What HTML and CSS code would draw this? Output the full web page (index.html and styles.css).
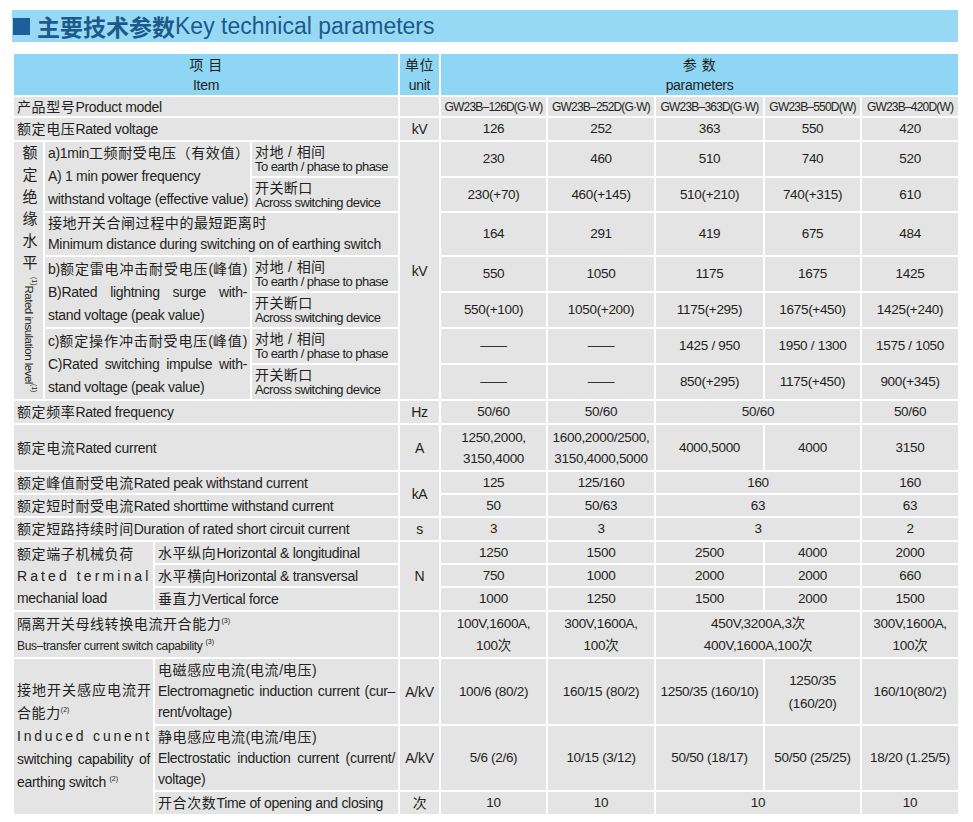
FILE: index.html
```html
<!DOCTYPE html>
<html lang="zh-CN">
<head>
<meta charset="utf-8">
<title>主要技术参数</title>
<link rel="stylesheet" href="styles.css">
</head>
<body>
<div class="page">
  <div class="title-bar">
    <span class="title-mark"></span>
    <span class="title-cn">主要技术参数</span><span class="title-en">Key technical parameters</span>
  </div>
  <table class="spec">
    <colgroup>
      <col class="c-a"><col class="c-b"><col class="c-c"><col class="c-d"><col class="c-unit">
      <col class="c-p1"><col class="c-p2"><col class="c-p3"><col class="c-p4"><col class="c-p5">
    </colgroup>
    <thead>
      <tr class="h43">
        <th colspan="4"><div class="zh hd-gap">项 目</div><div>Item</div></th>
        <th><div class="zh">单位</div><div>unit</div></th>
        <th colspan="5"><div class="zh hd-gap">参 数</div><div>parameters</div></th>
      </tr>
    </thead>
    <tbody>
      <tr class="h21">
        <td colspan="4" class="item"><span class="zh">产品型号</span>Product model</td>
        <td class="unit"></td>
        <td class="val model">GW23B–126D(G·W)</td>
        <td class="val model">GW23B–252D(G·W)</td>
        <td class="val model">GW23B–363D(G·W)</td>
        <td class="val model">GW23B–550D(W)</td>
        <td class="val model">GW23B–420D(W)</td>
      </tr>
      <tr class="h24">
        <td colspan="4" class="item"><span class="zh">额定电压</span>Rated voltage</td>
        <td class="unit">kV</td>
        <td class="val">126</td><td class="val">252</td><td class="val">363</td><td class="val">550</td><td class="val">420</td>
      </tr>
      <tr class="h36">
        <td rowspan="7" class="vcell"><span class="vlabel"><span class="vzh">额定绝缘水平</span><span class="fn">(1)</span><span class="ven">Rated insulation level</span><span class="fn">(1)</span></span></td>
        <td colspan="2" rowspan="2" class="grp lh23">
          <div>a)1min<span class="zh">工频耐受电压（有效值）</span></div>
          <div>A) 1 min power frequency</div>
          <div>withstand voltage (effective value)</div>
        </td>
        <td class="sub"><div class="sub-zh">对地 / 相间</div><div class="sub-en">To earth / phase to phase</div></td>
        <td rowspan="7" class="unit">kV</td>
        <td class="val">230</td><td class="val">460</td><td class="val">510</td><td class="val">740</td><td class="val">520</td>
      </tr>
      <tr class="h35">
        <td class="sub"><div class="sub-zh">开关断口</div><div class="sub-en">Across switching device</div></td>
        <td class="val">230(+70)</td><td class="val">460(+145)</td><td class="val">510(+210)</td><td class="val">740(+315)</td><td class="val">610</td>
      </tr>
      <tr class="h44">
        <td colspan="3" class="grp lh21">
          <div><span class="zh">接地开关合闸过程中的最短距离时</span></div>
          <div>Minimum distance during switching on of earthing switch</div>
        </td>
        <td class="val">164</td><td class="val">291</td><td class="val">419</td><td class="val">675</td><td class="val">484</td>
      </tr>
      <tr class="h36">
        <td colspan="2" rowspan="2" class="grp lh23">
          <div class="jl">b)<span class="zh">额定雷电冲击耐受电压</span>(<span class="zh">峰值</span>)</div>
          <div class="jl">B)Rated lightning surge with-</div>
          <div>stand voltage (peak value)</div>
        </td>
        <td class="sub"><div class="sub-zh">对地 / 相间</div><div class="sub-en">To earth / phase to phase</div></td>
        <td class="val">550</td><td class="val">1050</td><td class="val">1175</td><td class="val">1675</td><td class="val">1425</td>
      </tr>
      <tr class="h36">
        <td class="sub"><div class="sub-zh">开关断口</div><div class="sub-en">Across switching device</div></td>
        <td class="val">550(+100)</td><td class="val">1050(+200)</td><td class="val">1175(+295)</td><td class="val">1675(+450)</td><td class="val">1425(+240)</td>
      </tr>
      <tr class="h36">
        <td colspan="2" rowspan="2" class="grp lh23">
          <div class="jl">c)<span class="zh">额定操作冲击耐受电压</span>(<span class="zh">峰值</span>)</div>
          <div class="jl">C)Rated switching impulse with-</div>
          <div>stand voltage (peak value)</div>
        </td>
        <td class="sub"><div class="sub-zh">对地 / 相间</div><div class="sub-en">To earth / phase to phase</div></td>
        <td class="val dash">——</td><td class="val dash">——</td><td class="val">1425 / 950</td><td class="val">1950 / 1300</td><td class="val">1575 / 1050</td>
      </tr>
      <tr class="h36">
        <td class="sub"><div class="sub-zh">开关断口</div><div class="sub-en">Across switching device</div></td>
        <td class="val dash">——</td><td class="val dash">——</td><td class="val">850(+295)</td><td class="val">1175(+450)</td><td class="val">900(+345)</td>
      </tr>
      <tr class="h24">
        <td colspan="4" class="item"><span class="zh">额定频率</span>Rated frequency</td>
        <td class="unit">Hz</td>
        <td class="val">50/60</td><td class="val">50/60</td><td colspan="2" class="val">50/60</td><td class="val">50/60</td>
      </tr>
      <tr class="h47">
        <td colspan="4" class="item"><span class="zh">额定电流</span>Rated current</td>
        <td class="unit">A</td>
        <td class="val lh21"><div>1250,2000,</div><div>3150,4000</div></td>
        <td class="val lh21"><div>1600,2000/2500,</div><div>3150,4000,5000</div></td>
        <td class="val">4000,5000</td>
        <td class="val">4000</td>
        <td class="val">3150</td>
      </tr>
      <tr class="h23">
        <td colspan="4" class="item"><span class="zh">额定峰值耐受电流</span>Rated peak withstand current</td>
        <td rowspan="2" class="unit">kA</td>
        <td class="val">125</td><td class="val">125/160</td><td colspan="2" class="val">160</td><td class="val">160</td>
      </tr>
      <tr class="h23">
        <td colspan="4" class="item"><span class="zh">额定短时耐受电流</span>Rated shorttime withstand current</td>
        <td class="val">50</td><td class="val">50/63</td><td colspan="2" class="val">63</td><td class="val">63</td>
      </tr>
      <tr class="h24">
        <td colspan="4" class="item"><span class="zh">额定短路持续时间</span>Duration of rated short circuit current</td>
        <td class="unit">s</td>
        <td class="val">3</td><td class="val">3</td><td colspan="2" class="val">3</td><td class="val">2</td>
      </tr>
      <tr class="h23">
        <td colspan="2" rowspan="3" class="item lh22">
          <div><span class="zh">额定端子机械负荷</span></div>
          <div class="spread-rt">Rated terminal</div>
          <div>mechanial load</div>
        </td>
        <td colspan="2" class="item"><span class="zh">水平纵向</span>Horizontal &amp; longitudinal</td>
        <td rowspan="3" class="unit">N</td>
        <td class="val">1250</td><td class="val">1500</td><td class="val">2500</td><td class="val">4000</td><td class="val">2000</td>
      </tr>
      <tr class="h23">
        <td colspan="2" class="item"><span class="zh">水平横向</span>Horizontal &amp; transversal</td>
        <td class="val">750</td><td class="val">1000</td><td class="val">2000</td><td class="val">2000</td><td class="val">660</td>
      </tr>
      <tr class="h24">
        <td colspan="2" class="item"><span class="zh">垂直力</span>Vertical force</td>
        <td class="val">1000</td><td class="val">1250</td><td class="val">1500</td><td class="val">2000</td><td class="val">1500</td>
      </tr>
      <tr class="h47">
        <td colspan="4" class="item lh22">
          <div><span class="zh">隔离开关母线转换电流开合能力</span><span class="fn">(3)</span></div>
          <div class="small-en">Bus–transfer current switch capability <span class="fn">(3)</span></div>
        </td>
        <td class="unit"></td>
        <td class="val lh22"><div>100V,1600A,</div><div>100次</div></td>
        <td class="val lh22"><div>300V,1600A,</div><div>100次</div></td>
        <td colspan="2" class="val lh22"><div>450V,3200A,3次</div><div>400V,1600A,100次</div></td>
        <td class="val lh22"><div>300V,1600A,</div><div>100次</div></td>
      </tr>
      <tr class="h67">
        <td colspan="2" rowspan="3" class="item lh23">
          <div class="spread-zh">接地开关感应电流开</div>
          <div><span class="zh">合能力</span><span class="fn">(2)</span></div>
          <div class="spread-ic">Induced cunent</div>
          <div class="jl">switching capability of</div>
          <div>earthing switch <span class="fn">(2)</span></div>
        </td>
        <td colspan="2" class="item lh21">
          <div><span class="zh">电磁感应电流</span>(<span class="zh">电流</span>/<span class="zh">电压</span>)</div>
          <div class="jl">Electromagnetic induction current (cur–</div>
          <div>rent/voltage)</div>
        </td>
        <td class="unit">A/kV</td>
        <td class="val">100/6 (80/2)</td>
        <td class="val">160/15 (80/2)</td>
        <td class="val">1250/35 (160/10)</td>
        <td class="val lh23"><div>1250/35</div><div>(160/20)</div></td>
        <td class="val">160/10(80/2)</td>
      </tr>
      <tr class="h66">
        <td colspan="2" class="item lh21">
          <div><span class="zh">静电感应电流</span>(<span class="zh">电流</span>/<span class="zh">电压</span>)</div>
          <div class="jl">Electrostatic induction current (current/</div>
          <div>voltage)</div>
        </td>
        <td class="unit">A/kV</td>
        <td class="val">5/6 (2/6)</td>
        <td class="val">10/15 (3/12)</td>
        <td class="val">50/50 (18/17)</td>
        <td class="val">50/50 (25/25)</td>
        <td class="val">18/20 (1.25/5)</td>
      </tr>
      <tr class="h24">
        <td colspan="2" class="item"><span class="zh">开合次数</span>Time of opening and closing</td>
        <td class="unit zh">次</td>
        <td class="val">10</td><td class="val">10</td><td colspan="2" class="val">10</td><td class="val">10</td>
      </tr>
    </tbody>
  </table>
</div>
</body>
</html>
```

FILE: styles.css
```css
body {
  margin: 0;
  background: #ffffff;
  font-family: "Liberation Sans", "Noto Sans CJK SC", sans-serif;
  color: #231f20;
}

.page {
  padding: 10px 0 8px 12px;
  width: 946px;
}

.title-bar {
  height: 32px;
  background: #97d9f5;
  display: flex;
  align-items: center;
}

.title-mark {
  width: 17px;
  height: 17px;
  background: #1f5f99;
  margin: 0 7px 0 1px;
}

.title-cn {
  font-family: "Noto Sans CJK SC", sans-serif;
  font-weight: 700;
  font-size: 23px;
  line-height: 32px;
  color: #1c5a8a;
}

.title-en {
  font-family: "Liberation Sans", sans-serif;
  font-size: 23px;
  line-height: 32px;
  color: #1c5a8a;
}

.spec {
  margin-top: 10px;
  width: 946px;
  border-collapse: collapse;
  table-layout: fixed;
  font-size: 14px;
}

.c-a { width: 31px; }
.c-b { width: 110px; }
.c-c { width: 97px; }
.c-d { width: 148px; }
.c-unit { width: 41px; }
.c-p1 { width: 107px; }
.c-p2 { width: 108px; }
.c-p3 { width: 109px; }
.c-p4 { width: 97px; }
.c-p5 { width: 98px; }

.spec th,
.spec td {
  border: 2px solid #ffffff;
  background: #e4e4e4;
  padding: 0 3px;
  vertical-align: middle;
  font-weight: normal;
  letter-spacing: -0.3px;
  white-space: nowrap;
  line-height: 18px;
}

.spec th {
  background: #8ed6f4;
  line-height: 20px;
  text-align: center;
}

.spec th > div { height: 20px; }

.hd-gap { letter-spacing: 4px; }

.h21 { height: 21px; }
.h23 { height: 23px; }
.h24 { height: 24px; }
.h35 { height: 35px; }
.h36 { height: 36px; }
.h43 { height: 43px; }
.h44 { height: 44px; }
.h47 { height: 47px; }
.h66 { height: 66px; }
.h67 { height: 67px; }

.spec .lh21 { line-height: 21px; }
.spec .lh22 { line-height: 22px; }
.spec .lh23 { line-height: 23px; }

.lh21 > div { height: 21px; }
.lh22 > div { height: 22px; }
.lh23 > div { height: 23px; }

.zh { letter-spacing: 0.6px; }

.item { text-align: left; }

.grp { padding-left: 5px; padding-right: 4px; }

.jl {
  text-align: justify;
  text-align-last: justify;
}

.unit { text-align: center; }

.spec .val {
  text-align: center;
  font-size: 13.5px;
  padding: 0 2px;
}

.spec .model {
  font-size: 12px;
  letter-spacing: -0.8px;
}

.dash {
  letter-spacing: 0;
  color: #333333;
}

.sub { padding-left: 3px; }

.sub-zh {
  font-size: 14px;
  line-height: 16px;
  height: 16px;
  letter-spacing: 0.4px;
}

.sub-en {
  font-size: 13px;
  line-height: 14px;
  height: 14px;
  letter-spacing: -0.55px;
}

.small-en {
  font-size: 12px;
  letter-spacing: -0.35px;
}

.fn {
  font-size: 7px;
  letter-spacing: 0;
  vertical-align: 6px;
  line-height: 0;
}

.spread-rt { letter-spacing: 3.1px; }
.spread-ic { letter-spacing: 2.8px; }
.spread-zh { letter-spacing: 1px; }

.vcell {
  padding: 0;
  text-align: center;
}

.vlabel {
  display: inline-block;
  writing-mode: vertical-rl;
  text-orientation: mixed;
  line-height: 16px;
  white-space: nowrap;
}

.vzh {
  font-size: 15px;
  letter-spacing: 7px;
}

.ven {
  font-size: 11.5px;
  letter-spacing: -0.5px;
}

.vlabel .fn {
  vertical-align: super;
  font-size: 7px;
}
```
